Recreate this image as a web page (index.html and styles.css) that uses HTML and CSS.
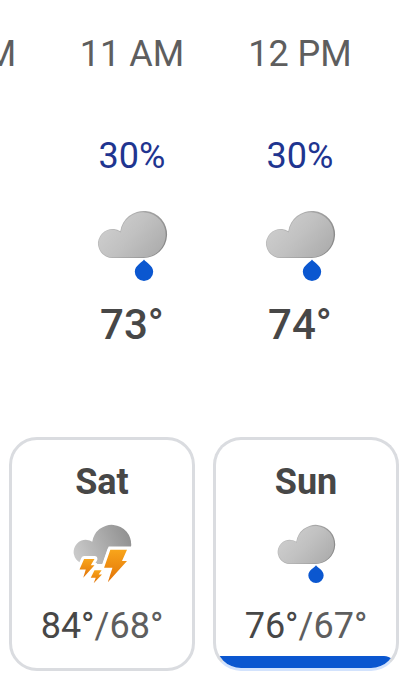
FILE: index.html
```html
<!DOCTYPE html>
<html lang="en">
<head>
    <meta charset="UTF-8">
    <meta name="viewport" content="width=device-width, initial-scale=1">
    <title>Weather</title>
    <link rel="stylesheet" href="styles.css">
</head>
<body>

<!-- shared icons -->
<svg class="icon-defs" aria-hidden="true">
    <defs>
        <linearGradient id="cloud-fill" x1="0" y1="0.2" x2="1" y2="0.8">
            <stop offset="0" stop-color="#d0d0d0"/>
            <stop offset="0.5" stop-color="#c1c1c1"/>
            <stop offset="1" stop-color="#acacac"/>
        </linearGradient>
        <linearGradient id="cloud-edge" x1="0" y1="0.2" x2="1" y2="0.6">
            <stop offset="0" stop-color="#c6c6c6"/>
            <stop offset="1" stop-color="#8a8a8a"/>
        </linearGradient>
        <linearGradient id="storm-fill" x1="0" y1="0.6" x2="1" y2="0.3">
            <stop offset="0" stop-color="#c9c9c9"/>
            <stop offset="1" stop-color="#909090"/>
        </linearGradient>
        <linearGradient id="bolt-fill" x1="0" y1="0" x2="0" y2="1">
            <stop offset="0" stop-color="#f8a51b"/>
            <stop offset="1" stop-color="#e27308"/>
        </linearGradient>
    </defs>
    <symbol id="rain" viewBox="0 0 72 72">
        <path d="M16.500 48A14.500 14.500 0 1 1 24.300 21.300A23.500 23.500 0 1 1 47.500 48Z" fill="url(#cloud-edge)"/>
        <path d="M16.500 47.300A13.800 13.800 0 1 1 24.800 22.400A22.500 22.500 0 1 1 46.500 47.300Z" fill="url(#cloud-fill)"/>
        <path d="M48 49.500C46 52.500 38.800 55.500 38.800 61.700A9.200 9.200 0 0 0 57.200 61.700C57.200 55.500 50 52.500 48 49.500Z" fill="#0b57d0"/>
    </symbol>
    <symbol id="storm" viewBox="0 0 72 72">
        <path d="M16.500 48A14.500 14.500 0 1 1 24.300 21.300A23.500 23.500 0 1 1 47.500 48Z" fill="url(#storm-fill)"/>
        <path d="M44 27H72V50H36Z" fill="#fff"/>
        <g fill="url(#bolt-fill)" stroke="#fff" stroke-width="7" stroke-linejoin="round" paint-order="stroke">
            <path d="M46 31H66L60 44.500H66L43 70L48.500 52.500H38.500Z"/>
            <path d="M14.500 42H27L22.500 49.500H27L13.500 64.500L16.500 54.500H9Z"/>
            <path d="M27 55.500H35.500L32 60.500H36L26 71L28.500 64.500H22.500Z"/>
        </g>
    </symbol>
</svg>

<main>
    <section class="hours" aria-label="Hourly forecast">
        <div class="hour">
            <div class="hour-time">10 AM</div>
        </div>
        <div class="hour">
            <div class="hour-time">11 AM</div>
            <div class="hour-rain">30%</div>
            <svg class="hour-icon" aria-hidden="true"><use href="#rain"/></svg>
            <div class="hour-temp">73°</div>
        </div>
        <div class="hour">
            <div class="hour-time">12 PM</div>
            <div class="hour-rain">30%</div>
            <svg class="hour-icon" aria-hidden="true"><use href="#rain"/></svg>
            <div class="hour-temp">74°</div>
        </div>
    </section>

    <section class="days" aria-label="Daily forecast">
        <button class="day" type="button">
            <span class="day-name">Sat</span>
            <svg class="day-icon" aria-hidden="true"><use href="#storm"/></svg>
            <span class="day-temp"><span class="high">84°</span>/68°</span>
        </button>
        <button class="day selected" type="button">
            <span class="day-name">Sun</span>
            <svg class="day-icon" aria-hidden="true"><use href="#rain"/></svg>
            <span class="day-temp"><span class="high">76°</span>/67°</span>
        </button>
    </section>
</main>

</body>
</html>
```
FILE: styles.css
```css
body {
    margin: 0;
    background-color: #fff;
    color: #5e5e5e;
    font-family: Roboto, Arial, sans-serif;
    font-size: 36px;
    line-height: 42px;
}

.icon-defs {
    position: absolute;
    width: 0;
    height: 0;
}

/* hourly strip, scrolled to its end */
.hours {
    display: flex;
    justify-content: flex-end;
    padding: 33px 32px 0 0;
    overflow: hidden;
}

.hour {
    display: flex;
    flex: 0 0 168px;
    flex-direction: column;
    align-items: center;
}

.hour-rain {
    margin-top: 60px;
    color: #1f3590;
}

.hour-icon {
    width: 72px;
    height: 72px;
    margin-top: 33px;
}

.hour-temp {
    margin-top: 19px;
    color: #474747;
    font-size: 42px;
    font-weight: 500;
    line-height: 48px;
}

/* day cards */
.days {
    display: grid;
    grid-template-columns: 1fr 1fr;
    gap: 18px;
    padding: 0 17px 27px 9px;
    margin-top: 88px;
}

.day {
    display: flex;
    flex-direction: column;
    align-items: center;
    padding: 21px 0 0;
    border: 3px solid #dadce0;
    border-radius: 28px;
    background-color: #fff;
    color: inherit;
    font: inherit;
    overflow: hidden;
    cursor: pointer;
}

.day-name {
    color: #474747;
    font-weight: 700;
}

.day-icon {
    width: 60px;
    height: 60px;
    margin-top: 21px;
}

.day-temp {
    margin-top: 21px;
}

.day-temp .high {
    color: #474747;
}

.day::after {
    content: "";
    width: 100%;
    height: 12px;
    margin-top: 9px;
}

.day.selected {
    border-bottom-color: #d3e3fd;
}

.day.selected::after {
    background-color: #0b57d0;
    border-top-right-radius: 12px;
}
```
